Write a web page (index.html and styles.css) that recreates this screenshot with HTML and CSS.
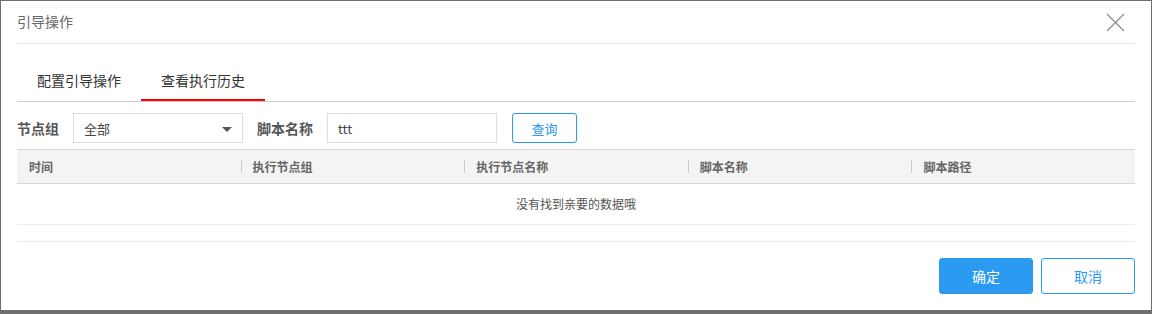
FILE: index.html
```html
<!DOCTYPE html>
<html lang="zh-CN">
<head>
    <meta charset="UTF-8">
    <title>引导操作</title>
    <link rel="stylesheet" href="styles.css">
</head>
<body>
    <div class="dialog">
        <div class="dialog-header">
            <span class="dialog-title">引导操作</span>
            <span class="close-btn">
                <svg width="19" height="19" viewBox="0 0 19 19">
                    <path d="M1 1 L18 18 M18 1 L1 18" stroke="#8c8c8c" stroke-width="1.2" fill="none"/>
                </svg>
            </span>
        </div>

        <ul class="tabs">
            <li class="tab">配置引导操作</li>
            <li class="tab active">查看执行历史</li>
        </ul>

        <div class="filter-row">
            <label class="filter-label">节点组</label>
            <div class="select-box">
                <span>全部</span>
                <span class="caret"></span>
            </div>
            <label class="filter-label">脚本名称</label>
            <div class="text-input">ttt</div>
            <button class="btn-outline">查询</button>
        </div>

        <div class="table">
            <div class="table-head">
                <div class="th">时间</div>
                <div class="th"><span class="sep"></span>执行节点组</div>
                <div class="th"><span class="sep"></span>执行节点名称</div>
                <div class="th"><span class="sep"></span>脚本名称</div>
                <div class="th"><span class="sep"></span>脚本路径</div>
            </div>
            <div class="table-empty">没有找到亲要的数据哦</div>
        </div>

        <div class="dialog-footer">
            <button class="btn btn-primary">确定</button>
            <button class="btn btn-default">取消</button>
        </div>
    </div>
</body>
</html>
```

FILE: styles.css
```css
body {
    margin: 0;
    background: #6e6e6e;
    font-family: "Noto Sans CJK SC", "Noto Sans", sans-serif;
    color: #333;
}
.dialog {
    background: #fff;
    margin: 1px 1px 0 1px;
    height: 309px;
    padding: 0 16px 0 16px;
    box-sizing: border-box;
}
.dialog-header {
    height: 42px;
    border-bottom: 1px solid #e8e8e8;
    display: flex;
    align-items: center;
    justify-content: space-between;
}
.dialog-title {
    font-size: 14px;
    color: #666;
    margin-top: -2px;
}
.close-btn {
    display: flex;
    margin-right: 10px;
    margin-top: 1px;
}
.tabs {
    list-style: none;
    margin: 17px 0 0 0;
    padding: 0;
    display: flex;
    border-bottom: 1px solid #ccc;
}
.tab {
    padding: 0 20px;
    height: 38px;
    line-height: 38px;
    font-size: 14px;
    color: #333;
    border-bottom: 2px solid transparent;
}
.tab.active {
    border-bottom-color: #f00;
}
.filter-row {
    display: flex;
    align-items: center;
    gap: 14px;
    margin-top: 11px;
    height: 30px;
}
.filter-label {
    font-size: 14px;
    font-weight: bold;
    color: #555;
}
.select-box,
.text-input {
    width: 170px;
    height: 30px;
    box-sizing: border-box;
    border: 1px solid #ddd;
    padding: 0 10px;
    display: flex;
    align-items: center;
    justify-content: space-between;
    font-size: 13px;
    color: #444;
}
.caret {
    width: 0;
    height: 0;
    border-left: 5px solid transparent;
    border-right: 5px solid transparent;
    border-top: 5px solid #555;
    margin-top: 2px;
}
.btn-outline {
    margin-left: 1px;
    width: 65px;
    height: 30px;
    border: 1px solid #2b9bf2;
    border-radius: 3px;
    background: #fff;
    color: #2b9bf2;
    font-family: inherit;
    font-size: 13px;
    padding: 0;
}
.table {
    margin-top: 6px;
}
.table-head {
    display: grid;
    grid-template-columns: repeat(5, 1fr);
    height: 33px;
    background: #f4f4f4;
    border-top: 1px solid #d6d6d6;
    border-bottom: 1px solid #d6d6d6;
}
.th {
    display: flex;
    align-items: center;
    padding-left: 12px;
    font-size: 12px;
    font-weight: bold;
    color: #666;
}
.th .sep {
    width: 1px;
    height: 13px;
    background: #ccc;
    margin-left: -12px;
    margin-right: 11px;
}
.table-empty {
    height: 40px;
    line-height: 40px;
    text-align: center;
    font-size: 12px;
    color: #555;
    border-bottom: 1px solid #ececec;
}
.dialog-footer {
    margin-top: 16px;
    border-top: 1px solid #ececec;
    padding-top: 16px;
    display: flex;
    justify-content: flex-end;
    gap: 8px;
}
.btn {
    width: 94px;
    height: 36px;
    border-radius: 3px;
    font-family: inherit;
    font-size: 14px;
    padding: 0;
}
.btn-primary {
    background: #2b9bf2;
    border: 1px solid #2b9bf2;
    color: #fff;
}
.btn-default {
    background: #fff;
    border: 1px solid #2b9bf2;
    color: #2b9bf2;
}
```
